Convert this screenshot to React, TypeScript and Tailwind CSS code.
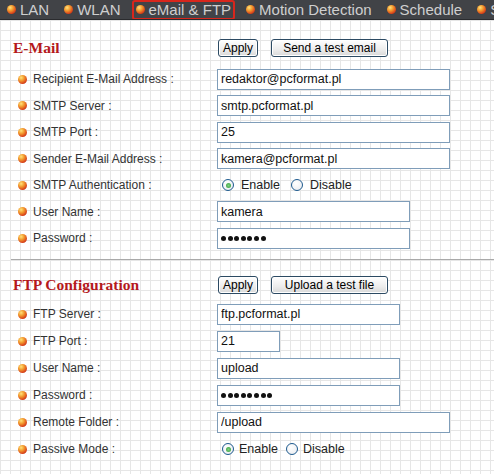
import type { ReactNode } from "react";

const navItems = ["LAN", "WLAN", "eMail & FTP", "Motion Detection", "Schedule", "Sys"];

function Ball({ size = 9 }: { size?: number }) {
  return (
    <span
      className="inline-block shrink-0 rounded-full bg-[radial-gradient(circle_at_35%_30%,#ffe27a_0%,#f29a2e_35%,#d9421a_70%,#8f1d0c_100%)]"
      style={{ width: size, height: size }}
    />
  );
}

function Btn({ children, w }: { children: ReactNode; w: string }) {
  return (
    <button
      className={`${w} h-[18px] rounded-[3px] border border-[#2c4a63] bg-[linear-gradient(#ffffff,#ececec_60%,#d8d8d8)] text-[12px] leading-none text-black shadow-[inset_0_0_0_1px_#fff]`}
    >
      {children}
    </button>
  );
}

function Field({ value, w }: { value: string; w: string }) {
  return (
    <input
      readOnly
      value={value}
      className={`${w} h-[21px] border border-[#7f9db9] bg-white px-[3px] text-[12.5px] text-[#111] outline-none`}
    />
  );
}

// password box, dots drawn like the browser's masked input
function Secret({ count, w }: { count: number; w: string }) {
  return (
    <div className={`${w} flex h-[21px] items-center gap-[1.6px] border border-[#7f9db9] bg-white px-[3px]`}>
      {Array.from({ length: count }).map((_, i) => (
        <span key={i} className="h-[5px] w-[5px] rounded-full bg-[#111]" />
      ))}
    </div>
  );
}

function Radio({ checked }: { checked?: boolean }) {
  return (
    <span className="flex h-[12px] w-[12px] shrink-0 items-center justify-center rounded-full border border-[#1d5a8e] bg-[radial-gradient(circle_at_40%_35%,#ffffff,#e6e9ee)]">
      {checked && <span className="h-[5px] w-[5px] rounded-full bg-[radial-gradient(circle,#7fd17f,#2f9a3a)]" />}
    </span>
  );
}

function RadioPair({ wide }: { wide?: boolean }) {
  return (
    <div className="flex items-center pl-[5px] text-[12.5px] text-[#222]">
      <Radio checked />
      <span className={wide ? "ml-[7px] mr-[11px]" : "ml-[5px] mr-[8px]"}>Enable</span>
      <Radio />
      <span className={wide ? "ml-[7px]" : "ml-[5px]"}>Disable</span>
    </div>
  );
}

function Row({ label, children, h }: { label: string; children: ReactNode; h: string }) {
  return (
    <div className={`flex ${h} items-center`}>
      <div className="flex w-[217px] items-center pl-[18px]">
        <Ball />
        <span className="ml-[6px] text-[12px] text-[#333]">{label}</span>
      </div>
      {children}
    </div>
  );
}

function Heading({ title, second, secondW }: { title: string; second: string; secondW: string }) {
  return (
    <div className="flex h-[22px] items-center">
      <div className="w-[218px] pl-[13px] font-['Liberation_Serif',serif] text-[15.5px] font-bold text-[#b5191c]">
        {title}
      </div>
      <Btn w="w-[40px]">Apply</Btn>
      <div className="w-[13px]" />
      <Btn w={secondW}>{second}</Btn>
    </div>
  );
}

export default function App() {
  return (
    <div className="h-[474px] w-[494px] overflow-hidden bg-white font-['Liberation_Sans',Arial,sans-serif]">
      <div className="flex h-[20px] items-center gap-[7px] overflow-hidden border-b border-[#2a2b2e] bg-[#414347] pl-[3px] whitespace-nowrap">
        {navItems.map((n) => (
          <div
            key={n}
            className={`flex h-[20px] shrink-0 items-center gap-[4px] rounded-[3px] border-2 px-[2px] text-[15px] text-[#cfcfcf] ${
              n === "eMail & FTP" ? "border-[#d8261c]" : "border-transparent"
            }`}
          >
            <Ball />
            <span className="leading-none">{n}</span>
          </div>
        ))}
      </div>

      <div className="h-[454px] bg-[linear-gradient(to_right,#e6e6e6_1px,transparent_1px),linear-gradient(to_bottom,#e6e6e6_1px,transparent_1px)] bg-[size:10px_10px] pt-[17px]">
        <Heading title="E-Mail" second="Send a test email" secondW="w-[117px]" />
        <div className="mt-[7px]">
          <Row label="Recipient E-Mail Address :" h="h-[26.5px]">
            <Field value="redaktor@pcformat.pl" w="w-[233px]" />
          </Row>
          <Row label="SMTP Server :" h="h-[26.5px]">
            <Field value="smtp.pcformat.pl" w="w-[233px]" />
          </Row>
          <Row label="SMTP Port :" h="h-[26.5px]">
            <Field value="25" w="w-[233px]" />
          </Row>
          <Row label="Sender E-Mail Address :" h="h-[26.5px]">
            <Field value="kamera@pcformat.pl" w="w-[233px]" />
          </Row>
          <Row label="SMTP Authentication :" h="h-[26.5px]">
            <RadioPair wide />
          </Row>
          <Row label="User Name :" h="h-[26.5px]">
            <Field value="kamera" w="w-[193px]" />
          </Row>
          <Row label="Password :" h="h-[26.5px]">
            <Secret count={7} w="w-[193px]" />
          </Row>
        </div>

        <div className="mt-[7px] ml-[11px] border-t border-[#a9a9a9]" />

        <div className="mt-[14px]">
          <Heading title="FTP Configuration" second="Upload a test file" secondW="w-[117px]" />
        </div>
        <div className="mt-[5px]">
          <Row label="FTP Server :" h="h-[27px]">
            <Field value="ftp.pcformat.pl" w="w-[183px]" />
          </Row>
          <Row label="FTP Port :" h="h-[27px]">
            <Field value="21" w="w-[63px]" />
          </Row>
          <Row label="User Name :" h="h-[27px]">
            <Field value="upload" w="w-[183px]" />
          </Row>
          <Row label="Password :" h="h-[27px]">
            <Secret count={8} w="w-[183px]" />
          </Row>
          <Row label="Remote Folder :" h="h-[27px]">
            <Field value="/upload" w="w-[233px]" />
          </Row>
          <Row label="Passive Mode :" h="h-[27px]">
            <RadioPair />
          </Row>
        </div>
      </div>
    </div>
  );
}
